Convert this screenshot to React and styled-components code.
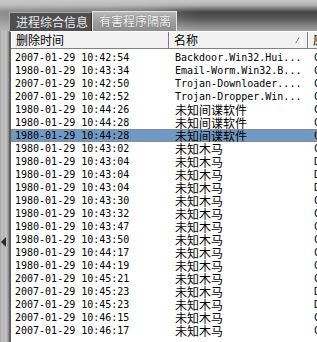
import React from "react";
import styled, { createGlobalStyle } from "styled-components";

const Global = createGlobalStyle`
  html, body { margin: 0; padding: 0; background: #ffffff; }
  #root { width: 317px; height: 342px; }
`;

const Page = styled.div`
  width: 317px;
  height: 342px;
  overflow: hidden;
  display: flex;
  flex-direction: column;
  position: relative;
  font-family: "Noto Sans CJK SC", sans-serif;
`;

const TopBar = styled.div`
  height: 31px;
  flex: none;
  display: flex;
  align-items: flex-end;
  padding-left: 9px;
  background:
    linear-gradient(to right, rgba(200,200,200,0.55) 0, rgba(200,200,200,0.35) 140px, rgba(0,0,0,0) 200px),
    linear-gradient(to bottom, #c8c8c8 0px, #b2b2b2 5px, #444444 12px, #555555 18px, #858585 26px, #a0a0a0 31px);
`;

const Tab = styled.div`
  box-sizing: border-box;
  height: ${(p) => (p.$active ? 20 : 19)}px;
  width: ${(p) => p.$w}px;
  padding-left: 6px;
  font-size: 12px;
  line-height: 17px;
  white-space: nowrap;
  overflow: hidden;
  color: ${(p) => (p.$active ? "#f6f6f6" : "#ececec")};
  background: ${(p) =>
    p.$active
      ? "linear-gradient(to bottom, #b8b8b8, #9a9a9a 60%, #8e8e8e)"
      : "#4e4e4e"};
  border: 1px solid ${(p) => (p.$active ? "#e6e6e6" : "#a8a8a8")};
  border-bottom: none;
  border-right-color: ${(p) => (p.$active ? "#e6e6e6" : "#2e2e2e")};
  text-shadow: ${(p) => (p.$active ? "0 0 1px #555" : "none")};
`;

const Body = styled.div`
  flex: 1;
  display: flex;
  min-height: 0;
`;

const LeftStrip = styled.div`
  width: 9px;
  flex: none;
  display: flex;
  flex-direction: column;
  padding-top: 206px;
  background: linear-gradient(to right, #9e9e9e 0, #c4c4c4 2px, #b0b0b0 4px, #cacaca 6px, #9a9a9a 8px, #8a8a8a 9px);
`;

const Arrow = styled.div`
  width: 0;
  height: 0;
  margin-left: 1px;
  border-top: 5px solid transparent;
  border-bottom: 5px solid transparent;
  border-right: 5px solid #2a2a2a;
`;

const Panel = styled.div`
  flex: 1;
  background: #ffffff;
  border-left: 2px solid #5e5e5e;
  border-top: 1px solid #ffffff;
  overflow: hidden;
  position: relative;
`;

const Header = styled.div`
  display: flex;
  height: 16px;
  background: #f2f2f2;
  border-bottom: 1px solid #808080;
  margin-bottom: 2px;
  white-space: nowrap;
`;

const HeadCell = styled.div`
  box-sizing: border-box;
  width: ${(p) => p.$w}px;
  flex: none;
  position: relative;
  padding-left: ${(p) => p.$pad}px;
  font-size: 12px;
  line-height: 16px;
  color: #000;
  border-left: 1px solid #ffffff;
  border-right: 1px solid #7a7a7a;
`;

const SortIcon = styled.svg`
  position: absolute;
  right: 4px;
  top: 5px;
`;

const Row = styled.div`
  display: flex;
  height: 13px;
  white-space: nowrap;
  background: ${(p) => (p.$selected ? "#7199c6" : "transparent")};
  outline: ${(p) => (p.$selected ? "1px dotted #b07a50" : "none")};
  outline-offset: -1px;
`;

const Cell = styled.div`
  box-sizing: border-box;
  width: ${(p) => p.$w}px;
  height: 13px;
  flex: none;
  padding-left: ${(p) => p.$pad}px;
  font-family: "DejaVu Sans Mono", "Noto Sans CJK SC", monospace;
  font-size: 10px;
  line-height: 13px;
  color: #000;
  overflow: hidden;
`;

const Cjk = styled.span`
  display: inline-block;
  height: 13px;
  vertical-align: top;
  font-family: "Noto Sans CJK SC", sans-serif;
  font-size: 12px;
  line-height: 13px;
`;

const Watermark = styled.div`
  position: absolute;
  left: 165px;
  top: 321px;
  font-family: "DejaVu Sans Mono", "Noto Sans CJK SC", monospace;
  font-size: 11px;
  letter-spacing: 0.5px;
  color: rgba(255, 255, 255, 0.85);
  text-shadow: 0 0 1px rgba(120, 120, 120, 0.5);
  white-space: pre;
  pointer-events: none;
`;

const rows = [
  ["2007-01-29 10:42:54", "Backdoor.Win32.Hui...", "C"],
  ["1980-01-29 10:43:34", "Email-Worm.Win32.B...", "C"],
  ["2007-01-29 10:42:50", "Trojan-Downloader....", "C"],
  ["2007-01-29 10:42:52", "Trojan-Dropper.Win...", "C"],
  ["1980-01-29 10:44:26", "未知间谍软件", "C"],
  ["1980-01-29 10:44:28", "未知间谍软件", "C"],
  ["1980-01-29 10:44:28", "未知间谍软件", "C", true],
  ["1980-01-29 10:43:02", "未知木马", "C"],
  ["1980-01-29 10:43:04", "未知木马", "D"],
  ["1980-01-29 10:43:04", "未知木马", "D"],
  ["1980-01-29 10:43:04", "未知木马", "D"],
  ["1980-01-29 10:43:30", "未知木马", "C"],
  ["1980-01-29 10:43:32", "未知木马", "C"],
  ["1980-01-29 10:43:47", "未知木马", "C"],
  ["1980-01-29 10:43:50", "未知木马", "C"],
  ["1980-01-29 10:44:17", "未知木马", "C"],
  ["1980-01-29 10:44:19", "未知木马", "C"],
  ["2007-01-29 10:45:21", "未知木马", "C"],
  ["2007-01-29 10:45:23", "未知木马", "D"],
  ["2007-01-29 10:45:23", "未知木马", "D"],
  ["2007-01-29 10:46:15", "未知木马", "C"],
  ["2007-01-29 10:46:17", "未知木马", "C"],
];

const isCjk = (s) => /[\u4e00-\u9fff]/.test(s);

export default function App() {
  return (
    <>
      <Global />
      <Page>
        <TopBar>
          <Tab $w={83}>进程综合信息</Tab>
          <Tab $w={85} $active>有害程序隔离</Tab>
        </TopBar>
        <Body>
          <LeftStrip>
            <Arrow />
          </LeftStrip>
          <Panel>
            <Header>
              <HeadCell $w={158} $pad={4}>删除时间</HeadCell>
              <HeadCell $w={139} $pad={4}>
                名称
                <SortIcon width="8" height="7" viewBox="0 0 8 7">
                  <path d="M0.5 6.5 L4 0.5" stroke="#808080" fill="none" />
                  <path d="M4 0.5 L7.5 6.5 L0.5 6.5" stroke="#ffffff" fill="none" />
                </SortIcon>
              </HeadCell>
              <HeadCell $w={60} $pad={4}>原始路径</HeadCell>
            </Header>
            {rows.map(([t, n, d, sel], i) => (
              <Row key={i} $selected={sel}>
                <Cell $w={158} $pad={4}>{t}</Cell>
                <Cell $w={139} $pad={6}>{isCjk(n) ? <Cjk>{n}</Cjk> : n}</Cell>
                <Cell $w={60} $pad={6}>{d}:\Documents</Cell>
              </Row>
            ))}
            <Watermark>图      366Tian.Net</Watermark>
          </Panel>
        </Body>
      </Page>
    </>
  );
}
